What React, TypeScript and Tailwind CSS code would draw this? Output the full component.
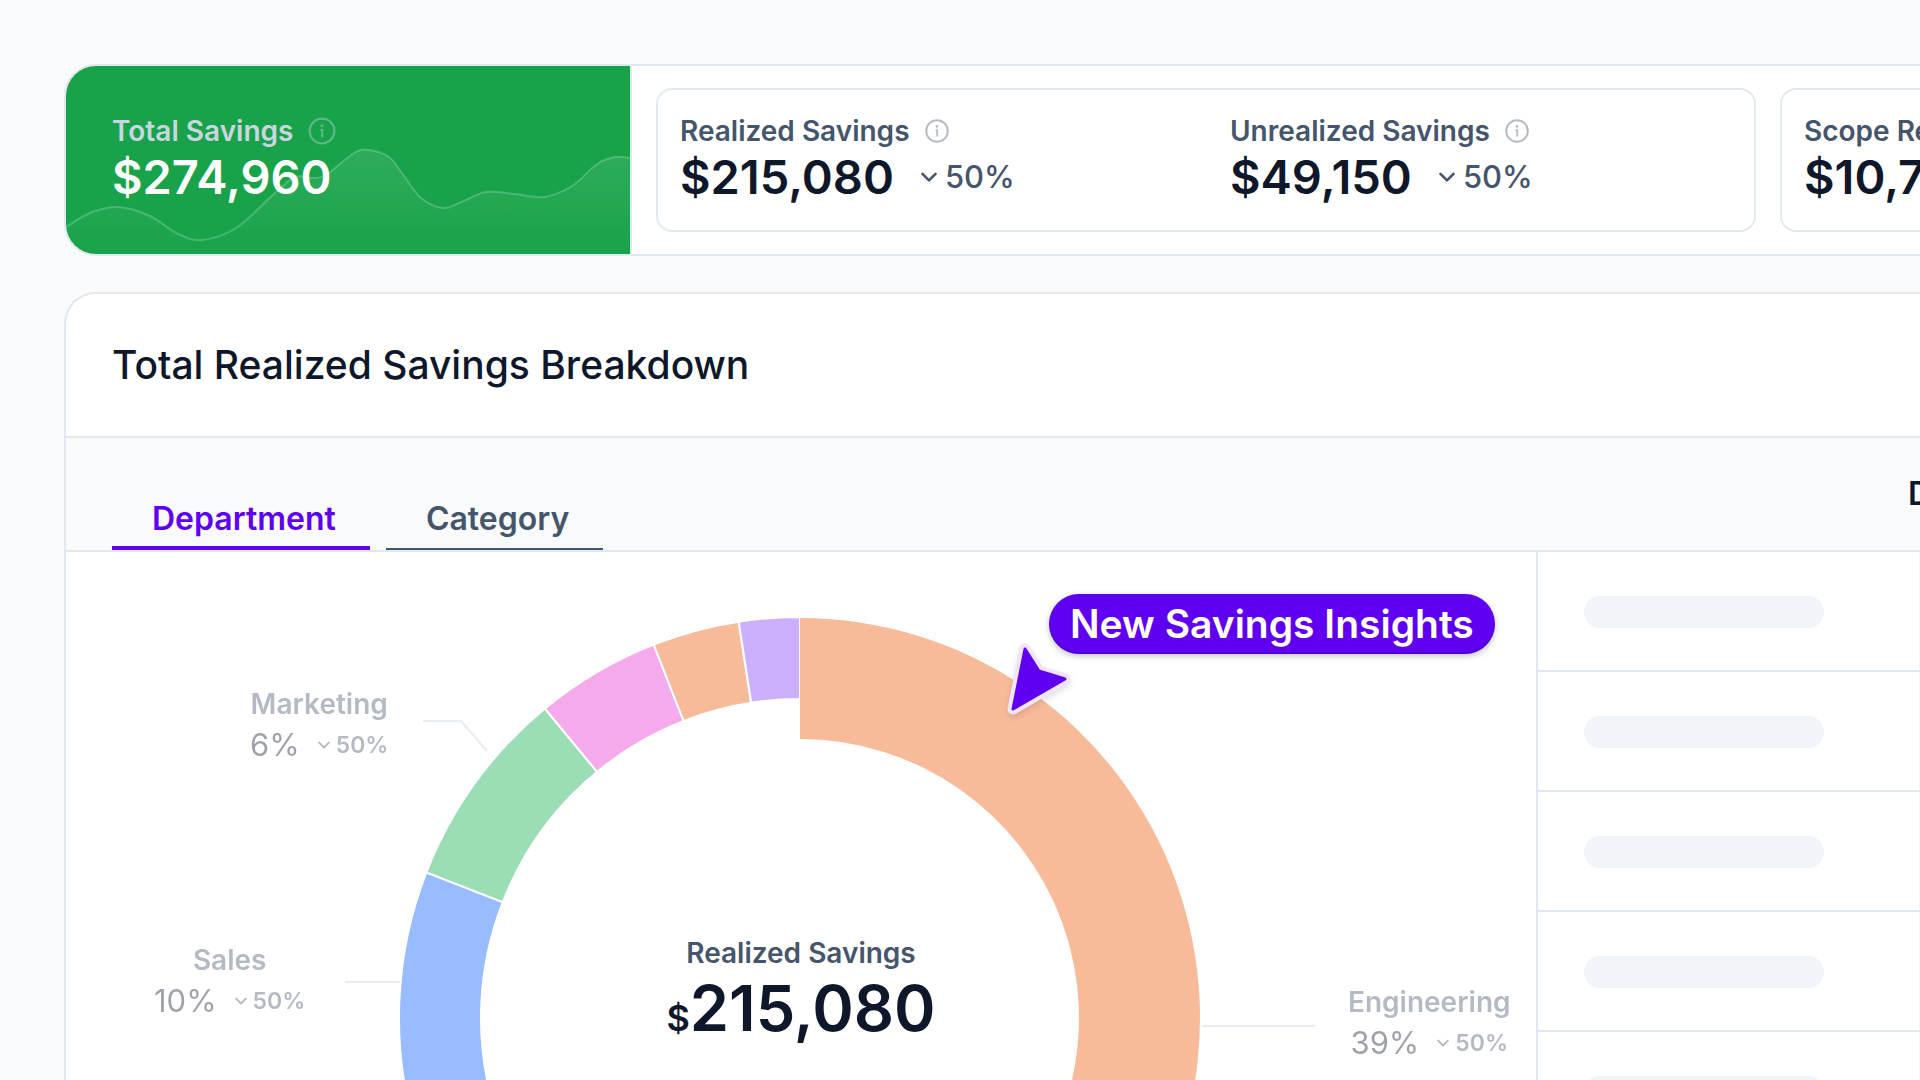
import { useState } from 'react'
import clsx from 'clsx'

type Point = [number, number]

interface Slice {
  name: string
  start: number
  end: number
  color: string
}

const CENTER: Point = [734, 466]

// Angles in degrees, clockwise from the top
const slices: Slice[] = [
  { name: 'Operations', start: 140, end: 255, color: '#fde29a' },
  { name: 'Sales', start: 255, end: 291.3, color: '#99bbff' },
  { name: 'Marketing', start: 291.3, end: 320.5, color: '#9bdeb5' },
  { name: 'Finance', start: 320.5, end: 338.6, color: '#f5abeb' },
  { name: 'Legal', start: 338.6, end: 351.2, color: '#f8bb9a' },
  { name: 'HR', start: 351.2, end: 360, color: '#ccb0ff' },
]

const sparkline: Point[] = [
  [0, 161], [26, 146], [53, 141], [84, 150], [112, 168], [136, 174], [170, 162],
  [210, 126], [229, 111], [246, 112], [260, 109], [288, 87], [303, 84], [323, 91],
  [336, 107], [355, 132], [377, 142], [393, 137], [420, 126], [449, 128],
  [478, 131], [506, 120], [531, 98], [549, 91], [564, 92],
]

const rows = [1, 2, 3, 4, 5]

function polar(radius: number, angle: number): Point {
  const rad = ((angle - 90) * Math.PI) / 180
  return [CENTER[0] + radius * Math.cos(rad), CENTER[1] + radius * Math.sin(rad)]
}

function arcPath(outer: number, inner: number, start: number, end: number) {
  const large = end - start > 180 ? 1 : 0
  return [
    `M${polar(outer, start)}`,
    `A${outer} ${outer} 0 ${large} 1 ${polar(outer, end)}`,
    `L${polar(inner, end)}`,
    `A${inner} ${inner} 0 ${large} 0 ${polar(inner, start)}`,
    'Z',
  ].join(' ')
}

function smoothPath(points: Point[]) {
  let d = `M${points[0]}`
  for (let i = 0; i < points.length - 1; i++) {
    const p0 = points[i - 1] ?? points[i]
    const p1 = points[i]
    const p2 = points[i + 1]
    const p3 = points[i + 2] ?? p2
    d += ` C${p1[0] + (p2[0] - p0[0]) / 6},${p1[1] + (p2[1] - p0[1]) / 6}`
    d += ` ${p2[0] - (p3[0] - p1[0]) / 6},${p2[1] - (p3[1] - p1[1]) / 6} ${p2}`
  }
  return d
}

function InfoIcon({ className }: { className?: string }) {
  return (
    <svg viewBox="0 0 28 28" fill="none" className={className} aria-hidden="true">
      <circle cx="14" cy="14" r="10.8" stroke="currentColor" strokeWidth="2" />
      <path d="M12.6 13.2H14.2V19.6" stroke="currentColor" strokeWidth="1.8" />
      <circle cx="14" cy="9.4" r="1.3" fill="currentColor" />
    </svg>
  )
}

function ChevronIcon({ className }: { className?: string }) {
  return (
    <svg viewBox="0 0 16 16" fill="none" className={className} aria-hidden="true">
      <path
        d="M1.5 4.8 8 11.3 14.5 4.8"
        stroke="currentColor"
        strokeWidth="2.6"
        strokeLinecap="round"
        strokeLinejoin="round"
      />
    </svg>
  )
}

function Metric({ label, value, change }: { label: string; value: string; change?: string }) {
  return (
    <div className="px-[22px] pt-[22px] pb-[26px] whitespace-nowrap">
      <div className="flex items-center gap-[13px]">
        <span className="text-[28px] leading-[38px] font-semibold text-slate-600">{label}</span>
        <InfoIcon className="w-7 h-7 text-slate-600/40" />
      </div>
      <div className="flex items-center gap-[27px]">
        <span className="text-[47px] leading-[54px] font-semibold text-slate-900">{value}</span>
        {change && (
          <span className="flex items-center gap-2 text-[31px] leading-[54px] font-medium text-slate-600">
            <ChevronIcon className="w-4 h-4" />
            {change}
          </span>
        )}
      </div>
    </div>
  )
}

function SliceLabel({ name, share, className }: { name: string; share: string; className: string }) {
  return (
    <div className={clsx('absolute flex flex-col items-center whitespace-nowrap opacity-40', className)}>
      <span className="text-[28px] leading-10 font-semibold text-slate-600">{name}</span>
      <div className="flex items-center gap-[18px]">
        <span className="text-[31px] leading-[42px] text-slate-900">{share}</span>
        <span className="flex items-center gap-1.5 text-[23px] leading-[42px] font-semibold text-slate-600">
          <ChevronIcon className="w-3 h-3" />
          50%
        </span>
      </div>
    </div>
  )
}

function SummaryCard() {
  const line = smoothPath(sparkline)

  return (
    <section className="flex shrink-0 bg-white border-2 border-r-0 border-slate-200 rounded-l-[32px] overflow-hidden">
      {/* Total */}
      <div className="relative w-[564px] shrink-0 bg-[#18a34a] px-[46px] py-[46px]">
        <svg viewBox="0 0 564 188" preserveAspectRatio="none" className="absolute inset-0 w-full h-full" aria-hidden="true">
          <defs>
            <linearGradient id="spark" x1="0" y1="84" x2="0" y2="188" gradientUnits="userSpaceOnUse">
              <stop stopColor="#fff" stopOpacity="0.1" />
              <stop offset="1" stopColor="#fff" stopOpacity="0" />
            </linearGradient>
          </defs>
          <path d={`${line} V188 H0 Z`} fill="url(#spark)" />
          <path d={line} fill="none" stroke="#fff" strokeOpacity="0.2" strokeWidth="2" />
        </svg>
        <div className="relative">
          <div className="flex items-center gap-[13px]">
            <span className="text-[28px] leading-[38px] font-semibold text-slate-300">Total Savings</span>
            <InfoIcon className="w-8 h-8 text-slate-300/40" />
          </div>
          <div className="text-[47px] leading-[54px] font-semibold text-white">$274,960</div>
        </div>
      </div>

      {/* Breakdown */}
      <div className="flex flex-1 gap-6 border-l-2 border-slate-200 px-6 py-[22px]">
        <div className="grid grid-cols-2 gap-1 w-[1100px] shrink-0 border-2 border-slate-200 rounded-2xl">
          <Metric label="Realized Savings" value="$215,080" change="50%" />
          <Metric label="Unrealized Savings" value="$49,150" change="50%" />
        </div>
        <div className="w-[550px] shrink-0 border-2 border-slate-200 rounded-2xl">
          <Metric label="Scope Reduction" value="$10,730" />
        </div>
      </div>
    </section>
  )
}

function DonutChart() {
  return (
    <div className="relative w-[1470px] shrink-0">
      <svg viewBox="0 0 1470 930" className="block w-full" role="img" aria-label="Realized savings by department">
        {slices.map((slice) => (
          <path
            key={slice.name}
            d={arcPath(401, 319, slice.start, slice.end)}
            fill={slice.color}
            stroke="#fff"
            strokeWidth="2"
          />
        ))}
        <path d={arcPath(400, 279, 0, 140)} fill="#f8bb9a" />
        <g fill="none" stroke="#e8edf4" strokeWidth="2">
          <path d="M357 169h38l26 30" />
          <path d="M279 430h55" />
          <path d="M1136 474h113" />
        </g>
      </svg>

      <SliceLabel name="Marketing" share="6%" className="left-[184px] top-[132px]" />
      <SliceLabel name="Sales" share="10%" className="left-[88px] top-[388px]" />
      <SliceLabel name="Engineering" share="39%" className="left-[1282px] top-[430px]" />

      {/* Total in the ring */}
      <div className="absolute inset-x-0 top-[381px] flex flex-col items-center">
        <span className="text-[28px] leading-10 font-semibold text-slate-600">Realized Savings</span>
        <span className="text-[63px] leading-[70px] font-semibold text-slate-900">
          <span className="text-4xl leading-[70px]">$</span>
          215,080
        </span>
      </div>

      {/* Callout */}
      <div className="absolute left-[983px] top-[42px] rounded-full bg-[#6000f0] px-[21px] text-[39px] leading-[60px] font-semibold text-white whitespace-nowrap shadow-[0_2px_6px_rgba(0,0,0,0.25),inset_0_-2px_2px_rgba(0,0,0,0.15)]">
        New Savings Insights
      </div>
      <svg viewBox="0 0 80 90" className="absolute left-[930px] top-[82px] w-20 h-[90px] drop-shadow-md" aria-hidden="true">
        <g strokeLinejoin="round">
          <path d="M29 15 43 37 69 45 17 75Z" fill="#efe5ff" stroke="#efe5ff" strokeWidth="11" />
          <path d="M29 15 43 37 69 45 17 75Z" fill="#6000f0" stroke="#6000f0" strokeWidth="3" />
        </g>
      </svg>
    </div>
  )
}

function BreakdownCard() {
  const [tab, setTab] = useState('Department')

  return (
    <section className="shrink-0 bg-white border-2 border-r-0 border-slate-200 rounded-tl-[32px] overflow-hidden">
      <h2 className="px-[46px] text-[39px] leading-[142px] font-medium text-slate-900">
        Total Realized Savings Breakdown
      </h2>

      <div className="flex border-y-2 border-slate-200 bg-slate-50 whitespace-nowrap">
        <div role="tablist" className="flex items-end gap-4 h-28 w-[1842px] shrink-0 px-[46px]">
          {['Department', 'Category'].map((name) => (
            <button
              key={name}
              role="tab"
              aria-selected={tab === name}
              onClick={() => setTab(name)}
              className={clsx(
                'h-[60px] pl-10 pr-[34px] text-[32px] leading-[54px] font-semibold',
                tab === name
                  ? 'pt-0.5 border-b-4 border-[#6000f0] text-[#6000f0]'
                  : 'border-b-2 border-slate-600 text-slate-600'
              )}
            >
              {name}
            </button>
          ))}
        </div>
        <h3 className="text-[32px] leading-[112px] font-semibold text-slate-900">Details</h3>
      </div>

      <div className="flex">
        <DonutChart />
        {/* Placeholder rows */}
        <div className="flex-1 border-l-2 border-slate-200">
          {rows.map((row) => (
            <div key={row} className="flex border-b-2 border-slate-200">
              <div className="flex-1 border-r border-slate-100 px-[46px] pt-11 pb-[42px]">
                <div className="w-60 h-8 rounded-full bg-slate-100" />
              </div>
            </div>
          ))}
        </div>
      </div>
    </section>
  )
}

export default function App() {
  return (
    <main className="flex flex-col gap-9 h-screen overflow-hidden bg-slate-50 pl-16 pt-16 font-['Inter',sans-serif]">
      <SummaryCard />
      <BreakdownCard />
    </main>
  )
}
